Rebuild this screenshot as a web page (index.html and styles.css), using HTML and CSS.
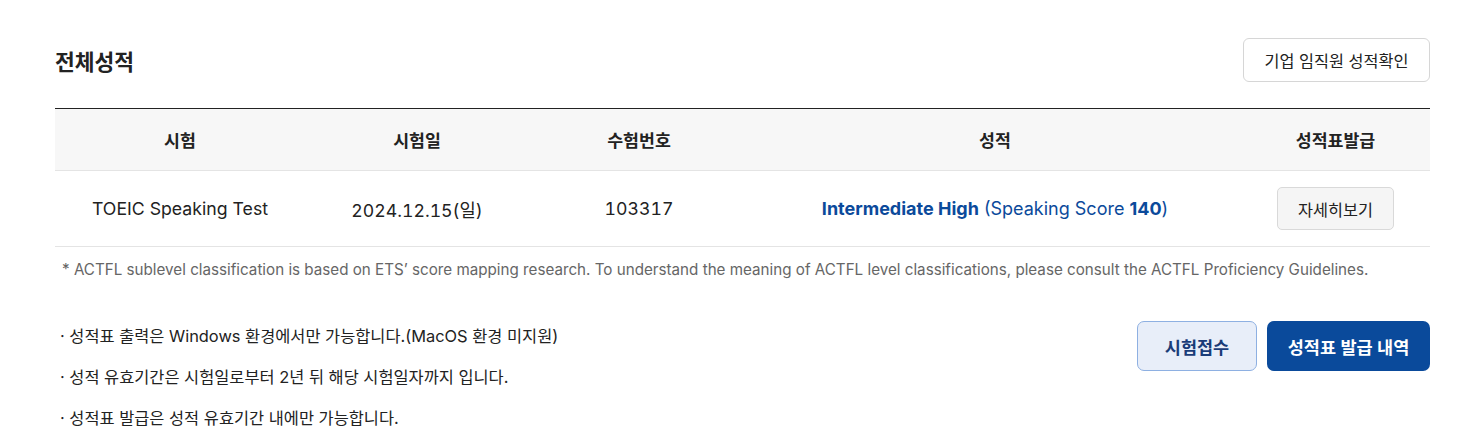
FILE: index.html
```html
<!DOCTYPE html>
<html lang="ko">
<head>
<meta charset="utf-8">
<title>전체성적</title>
<link rel="stylesheet" href="styles.css">
</head>
<body>
<div class="page">
  <div class="head">
    <h2 class="title">전체성적</h2>
    <button class="btn-outline">기업 임직원 성적확인</button>
  </div>

  <div class="table">
    <div class="row row-head">
      <div class="cell">시험</div>
      <div class="cell">시험일</div>
      <div class="cell">수험번호</div>
      <div class="cell">성적</div>
      <div class="cell">성적표발급</div>
    </div>
    <div class="row row-body">
      <div class="cell">TOEIC Speaking Test</div>
      <div class="cell num">2024.12.15(일)</div>
      <div class="cell num">103317</div>
      <div class="cell score"><b>Intermediate High</b> (Speaking Score <b>140</b>)</div>
      <div class="cell"><button class="btn-detail">자세히보기</button></div>
    </div>
  </div>

  <p class="footnote">* ACTFL sublevel classification is based on ETS’ score mapping research. To understand the meaning of ACTFL level classifications, please consult the ACTFL Proficiency Guidelines.</p>

  <div class="bottom">
    <ul class="notes">
      <li>· 성적표 출력은 Windows 환경에서만 가능합니다.(MacOS 환경 미지원)</li>
      <li>· 성적 유효기간은 시험일로부터 2년 뒤 해당 시험일자까지 입니다.</li>
      <li>· 성적표 발급은 성적 유효기간 내에만 가능합니다.</li>
    </ul>
    <div class="actions">
      <button class="btn-light">시험접수</button>
      <button class="btn-primary">성적표 발급 내역</button>
    </div>
  </div>
</div>
</body>
</html>
```

FILE: styles.css
```css
* { box-sizing: border-box; }
html, body { margin: 0; padding: 0; background: #fff; }
body {
  font-family: "Inter", "Noto Sans CJK KR", sans-serif;
  color: #222;
}
.page {
  padding: 38px 27px 0 55px;
}
.head {
  display: flex;
  justify-content: space-between;
  align-items: center;
  height: 44px;
}
.title {
  margin: 0;
  font-size: 21.5px;
  font-weight: 700;
  color: #222;
}
button {
  font-family: "Inter", "Noto Sans CJK KR", sans-serif;
  cursor: pointer;
}
.btn-outline {
  height: 44px;
  width: 187px;
  border: 1px solid #d6d6d6;
  border-radius: 6px;
  background: #fff;
  font-size: 16.3px;
  color: #222;
  padding: 0;
}
.table {
  margin-top: 26px;
}
.row {
  display: grid;
  grid-template-columns: 250px 224px 220px 492px 189px;
  align-items: center;
  text-align: center;
}
.row-head {
  height: 63px;
  background: #f7f7f7;
  border-top: 1px solid #222;
  border-bottom: 1px solid #e4e4e4;
  font-size: 17.3px;
  font-weight: 600;
}
.row-body {
  height: 76px;
  border-bottom: 1px solid #e4e4e4;
  font-size: 17.7px;
}
.num {
  font-variant-numeric: tabular-nums;
}
.score {
  color: #0b4a9b;
  font-size: 18px;
}
.score b { font-weight: 700; }
.btn-detail {
  width: 117px;
  height: 43px;
  border: 1px solid #d9d9d9;
  border-radius: 5px;
  background: #f5f5f5;
  font-size: 16.3px;
  color: #222;
  padding: 0;
}
.footnote {
  margin: 13px 0 0 7px;
  font-size: 15.2px;
  line-height: 20px;
  color: #666;
}
.bottom {
  display: flex;
  justify-content: space-between;
  align-items: flex-start;
  margin-top: 41px;
}
.notes {
  list-style: none;
  margin: 0;
  padding: 0 0 0 5px;
  font-size: 16.4px;
  color: #222;
}
.notes li {
  line-height: 30px;
  margin-bottom: 11px;
}
.actions {
  display: flex;
  gap: 10px;
}
.btn-light {
  width: 120px;
  height: 50px;
  border: 1px solid #8eb0e2;
  border-radius: 7px;
  background: #e8eef9;
  color: #1a3c78;
  font-size: 17.5px;
  font-weight: 600;
  padding: 0;
}
.btn-primary {
  width: 163px;
  height: 50px;
  border: none;
  border-radius: 7px;
  background: #0a4a9b;
  color: #fff;
  font-size: 17.5px;
  font-weight: 600;
  padding: 0;
}
```
